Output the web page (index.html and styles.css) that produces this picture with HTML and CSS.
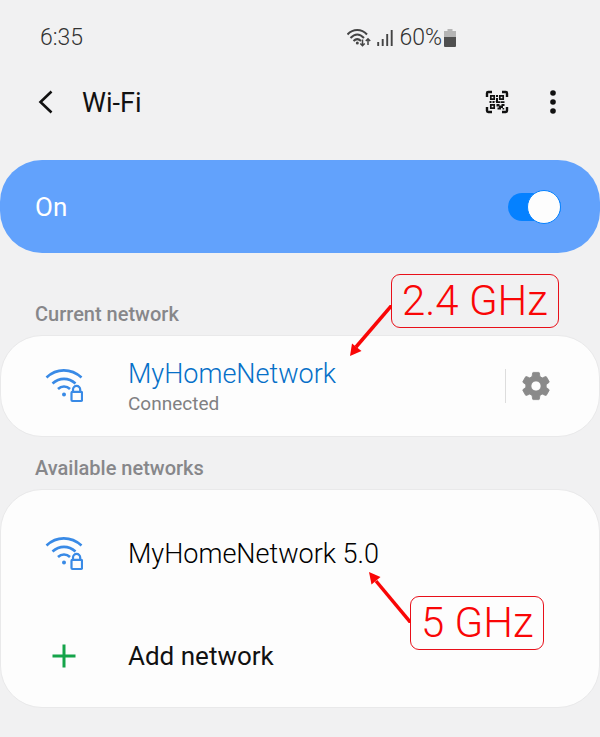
FILE: index.html
```html
<!DOCTYPE html>
<html lang="en">
<head>
  <meta charset="UTF-8">
  <meta name="viewport" content="width=device-width, initial-scale=1.0">
  <title>Wi-Fi</title>
  <link rel="stylesheet" href="styles.css">
</head>
<body>

<!-- Shared icon -->
<svg class="defs" width="0" height="0" aria-hidden="true">
  <symbol id="wifi-lock" viewBox="0 0 38 34">
    <g fill="none" stroke="currentColor" stroke-width="2.600">
      <path d="M1.500 8.500C11.500-1 26-1 36.500 8.500"/>
      <path d="M7.500 14.500C14.500 8.300 23.500 8.300 30.500 14.500"/>
      <path d="M13 20C16.500 16.600 21.500 16.600 25 20"/>
      <path d="M28 23v-2.500a3.600 3.600 0 0 1 7.200 0V23" stroke-width="2.200"/>
      <rect x="26.500" y="22.800" width="10.500" height="9.200" rx="1" stroke-width="2.200"/>
    </g>
    <circle cx="19" cy="25.500" r="2" fill="currentColor"/>
  </symbol>
</svg>

<div class="status-bar">
  <span class="clock">6:35</span>
  <div class="status-icons">
    <svg width="24" height="20" viewBox="0 0 24 20">
      <g fill="none" stroke="#444" stroke-width="2">
        <path d="M.500 6.500C6 .500 14.500.500 20 6.500"/>
        <path d="M3.500 10C8 5.300 12.500 5.300 17 10"/>
        <path d="M6.500 13C9 10.500 11.500 10.500 14 13"/>
      </g>
      <circle cx="10.300" cy="15" r="1.500" fill="#444"/>
      <path d="M15.500 11.500v6M13.300 15.500l2.200 2.200 2.200-2.200M21 17v-6M18.800 13l2.200-2.200 2.200 2.200" fill="none" stroke="#444" stroke-width="1.500"/>
    </svg>
    <svg width="16" height="18" viewBox="0 0 16 18">
      <path d="M1.200 17v-4M5.700 17v-7M10.200 17V5M14.700 17V1" stroke="#444" stroke-width="1.900"/>
    </svg>
    <span>60%</span>
    <svg class="battery" width="12" height="18" viewBox="0 0 12 18">
      <path d="M0 2h3.500V0h5v2H12v7H0z" fill="#b5b5b5"/>
      <path d="M0 8h12v9a1 1 0 0 1-1 1H1a1 1 0 0 1-1-1z" fill="#505050"/>
    </svg>
  </div>
</div>

<header class="header">
  <button class="icon-button" aria-label="Back">
    <svg width="16" height="24" viewBox="0 0 16 24">
      <path d="M13.500 1.500L2.500 12l11 10.500" fill="none" stroke="#111" stroke-width="2.600"/>
    </svg>
  </button>
  <h1>Wi-Fi</h1>
  <button class="icon-button" aria-label="Scan QR code">
    <svg width="24" height="24" viewBox="0 0 24 24">
      <g fill="none" stroke="#111" stroke-width="2.400">
        <path d="M2 7V3.200Q2 2 3.200 2H7M17 2h3.800Q22 2 22 3.200V7M22 17v3.800q0 1.200-1.200 1.200H17M7 22H3.200Q2 22 2 20.800V17"/>
        <path d="M5.800 5.800h3.400v3.400H5.800zM14.800 5.800h3.400v3.400h-3.400zM5.800 14.800h3.400v3.400H5.800z" stroke-width="1.700"/>
      </g>
      <path d="M11 5h2v2h-2zM11 8h2v3.200h2V13h-4v-1.800H9V11h2zM4.500 11h2v2h-2zM7.500 11h2v2h-2zM15.500 11.200h4V13h-4zM11.500 14h3v1.500h2V14h3v2h-1.500v2H16v1.500h-3.500v-2h1.500v-1h-2.500zM17.500 18h1.700v1.500h-1.700z" fill="#111"/>
    </svg>
  </button>
  <button class="icon-button" aria-label="More options">
    <svg width="8" height="24" viewBox="0 0 8 24">
      <g fill="#111">
        <circle cx="4" cy="3" r="2.800"/>
        <circle cx="4" cy="12" r="2.800"/>
        <circle cx="4" cy="21" r="2.800"/>
      </g>
    </svg>
  </button>
</header>

<main>
  <div class="power">
    <label for="wifiSwitch">On</label>
    <input type="checkbox" class="switch" id="wifiSwitch" checked>
  </div>

  <h2>Current network</h2>
  <section class="card current">
    <div class="network">
      <svg class="network-icon wifi"><use href="#wifi-lock"/></svg>
      <div class="network-text">
        <span class="ssid connected">MyHomeNetwork</span>
        <span class="state">Connected</span>
      </div>
      <button class="icon-button settings" aria-label="Network settings">
        <svg width="34" height="34" viewBox="0 0 24 24">
          <path fill="#8a8a8a" stroke="#8a8a8a" stroke-width=".600" d="M19.140 12.940c.040-.300.060-.610.060-.940 0-.320-.020-.640-.070-.940l2.030-1.580a.490.490 0 0 0 .120-.610l-1.920-3.320a.488.488 0 0 0-.590-.220l-2.390.960c-.500-.380-1.030-.700-1.620-.940l-.360-2.540a.484.484 0 0 0-.480-.410h-3.840c-.240 0-.430.170-.470.410l-.360 2.540c-.590.240-1.130.570-1.620.940l-2.390-.960c-.220-.080-.470 0-.590.220L2.740 8.870c-.120.210-.080.470.120.610l2.030 1.580c-.050.300-.090.630-.090.940s.020.640.070.940l-2.030 1.580a.490.490 0 0 0-.120.610l1.920 3.320c.120.220.370.290.590.220l2.390-.960c.500.380 1.030.700 1.620.940l.360 2.540c.050.240.240.410.480.410h3.840c.240 0 .440-.170.470-.410l.360-2.540c.590-.240 1.130-.560 1.620-.940l2.390.960c.220.080.470 0 .590-.220l1.920-3.320c.120-.220.070-.470-.120-.610l-2.010-1.580zM12 15.600A3.600 3.600 0 1 1 12 8.400a3.600 3.600 0 0 1 0 7.200z"/>
        </svg>
      </button>
    </div>
    <div class="callout callout-24">
      <svg class="arrow" width="44" height="52" viewBox="0 0 44 52">
        <path d="M44 0L8 42" stroke="#f90606" stroke-width="3.500"/>
        <path d="M2 51L4 38.500 13.500 46z" fill="#f90606"/>
      </svg>
      2.4 GHz
    </div>
  </section>

  <h2>Available networks</h2>
  <section class="card available">
    <div class="network">
      <svg class="network-icon wifi"><use href="#wifi-lock"/></svg>
      <span class="ssid">MyHomeNetwork 5.0</span>
    </div>
    <button class="network add">
      <svg class="network-icon" viewBox="0 0 38 34">
        <path d="M19 5.500v23M7.500 17h23" stroke="#15a44a" stroke-width="3"/>
      </svg>
      <span>Add network</span>
    </button>
    <div class="callout callout-5">
      <svg class="arrow" width="44" height="52" viewBox="0 0 44 52">
        <path d="M44 52L9 10" stroke="#f90606" stroke-width="3.500"/>
        <path d="M2 1L4.500 13.500 13.500 6z" fill="#f90606"/>
      </svg>
      5 GHz
    </div>
  </section>
</main>

</body>
</html>
```
FILE: styles.css
```css
* {
  box-sizing: border-box;
}

body {
  font-family: Roboto, Arial, sans-serif;
  margin: 0;
  background-color: #f1f1f2;
  color: #111;
}

.defs {
  position: absolute;
}

.status-bar {
  display: flex;
  align-items: center;
  justify-content: space-between;
  height: 75px;
  padding: 0 144px 0 40px;
  font-size: 23px;
  font-weight: 300;
  color: #333;
}

.status-icons {
  display: flex;
  align-items: center;
  gap: 6px;
}

.battery {
  margin-left: -4px;
}

.header {
  display: flex;
  align-items: center;
  height: 54px;
  padding: 0 43px 0 38px;
}

h1 {
  flex: 1;
  margin: 0 0 0 28px;
  padding-top: 2px;
  font-size: 27px;
  font-weight: 400;
  line-height: 34px;
}

.icon-button {
  display: flex;
  padding: 0;
  border: none;
  background: none;
  cursor: pointer;
}

.header .icon-button:last-child {
  margin-left: 40px;
}

.power {
  display: flex;
  align-items: center;
  justify-content: space-between;
  height: 93px;
  margin-top: 31px;
  padding: 0 39px 0 35px;
  border-radius: 42px;
  background-color: #62a2fc;
  color: white;
  font-size: 26px;
}

.switch {
  appearance: none;
  display: flex;
  align-items: center;
  justify-content: flex-end;
  width: 53px;
  height: 28px;
  margin: 0;
  border-radius: 14px;
  background-color: #0581ff;
  cursor: pointer;
}

.switch::before {
  content: "";
  width: 32px;
  height: 32px;
  flex: none;
  border: 1px solid #0581ff;
  border-radius: 50%;
  background-color: #fdfdfd;
}

.switch:not(:checked) {
  justify-content: flex-start;
}

h2 {
  margin: 0;
  padding-left: 35px;
  font-size: 20px;
  font-weight: 500;
  line-height: 24px;
  color: #87878a;
}

.power + h2 {
  margin-top: 49px;
}

.card {
  position: relative;
  margin: 9px 0 19px;
  border: 1px solid #e9e9ea;
  border-radius: 42px;
  background-color: #fdfdfd;
}

.network {
  display: flex;
  align-items: center;
  width: 100%;
  height: 102px;
  padding: 0 46px 0 44px;
}

.current .network {
  height: 100px;
}

.available {
  padding: 13px 0 0;
}

.network-icon {
  flex: none;
  width: 38px;
  height: 34px;
  margin-right: 45px;
  color: #398ae6;
}

.network-text {
  flex: 1;
  padding-top: 4px;
}

.ssid {
  font-size: 27px;
  font-weight: 300;
  line-height: 32px;
  color: #000;
}

.connected {
  color: #0670c8;
}

.state {
  display: block;
  font-size: 19px;
  line-height: 28px;
  color: #808082;
}

.settings {
  padding-left: 13px;
  border-left: 1px solid #ddd;
}

.add {
  border: none;
  background: none;
  font-family: inherit;
  font-size: 26px;
  color: #111;
  cursor: pointer;
}

/* Frequency labels over the list */
.callout {
  position: absolute;
  padding: 0 10px;
  border: 1px solid #e8101a;
  border-radius: 9px;
  font-size: 42px;
  font-weight: 300;
  line-height: 52px;
  white-space: nowrap;
  color: #f90606;
}

.callout-24 {
  top: -62px;
  left: 390px;
  background-color: #f1f1f2;
}

.callout-5 {
  top: 106px;
  left: 409px;
  background-color: #fdfdfd;
}

.arrow {
  position: absolute;
  right: 100%;
}

.callout-24 .arrow {
  top: 30px;
}

.callout-5 .arrow {
  bottom: 26px;
}
```
